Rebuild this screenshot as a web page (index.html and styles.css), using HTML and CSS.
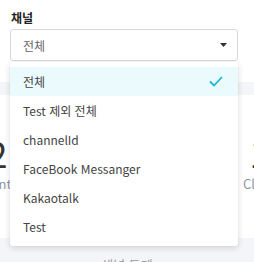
FILE: index.html
```html
<!DOCTYPE html>
<html lang="ko">
<head>
<meta charset="utf-8">
<link rel="stylesheet" href="styles.css">
</head>
<body>
<div class="filter">
  <div class="label">채널</div>
  <div class="select">
    <span class="value">전체</span>
    <svg class="caret" width="7" height="4" viewBox="0 0 7 4"><path d="M0 0H7L3.5 4Z" fill="#333"/></svg>
  </div>
  <ul class="menu">
    <li class="item selected">전체
      <svg class="check" width="14" height="11" viewBox="0 0 14 11"><path d="M1 5.5L5 9.5L13 1" fill="none" stroke="#1fb6d4" stroke-width="1.8"/></svg>
    </li>
    <li class="item">Test 제외 전체</li>
    <li class="item">channelId</li>
    <li class="item">FaceBook Messanger</li>
    <li class="item">Kakaotalk</li>
    <li class="item">Test</li>
  </ul>
</div>
<div class="dashboard">
  <div class="cards">
    <div class="card"><div class="num">2</div><div class="cap">Sent</div></div>
    <div class="card"><div class="num">0</div><div class="cap">Open</div></div>
    <div class="card"><div class="num">1</div><div class="cap">Close</div></div>
  </div>
  <div class="section-title">채널 통계</div>
</div>
</body>
</html>
```
FILE: styles.css
```css
* { box-sizing: border-box; }
html, body { margin: 0; padding: 0; }
body {
  font-family: "Noto Sans CJK KR", "Noto Sans", sans-serif;
  background: #fff;
  overflow: hidden;
  width: 254px;
  height: 262px;
}
.filter {
  position: relative;
  padding: 9px 16px 21px 10px;
  background: #fff;
}
.label {
  font-size: 12px;
  font-weight: 700;
  color: #222;
  line-height: 17px;
  margin: 0 0 3px 1px;
}
.select {
  height: 32px;
  border: 1px solid #d4d7dc;
  border-radius: 3px;
  display: flex;
  align-items: center;
  justify-content: space-between;
  padding: 0 10px 0 12px;
}
.value {
  font-size: 12px;
  color: #666;
}
.caret { display: block; }
.menu {
  position: absolute;
  top: 62px;
  left: 10px;
  width: 228px;
  margin: 0;
  padding: 5px 0;
  list-style: none;
  background: #fff;
  border-radius: 3px;
  box-shadow: 0 2px 6px rgba(0, 0, 0, 0.14), 0 0 1px rgba(0, 0, 0, 0.12);
  z-index: 2;
}
.item {
  height: 29px;
  display: flex;
  align-items: center;
  justify-content: space-between;
  padding: 0 15px 0 13px;
  font-size: 12px;
  color: #444;
}
.item.selected { background: #ebfbfd; }
.check { display: block; }
.dashboard {
  background: #f4f5f8;
  padding-top: 13px;
}
.cards {
  display: grid;
  grid-template-columns: repeat(3, 121px);
  gap: 10px;
  margin-left: -63px;
}
.card {
  background: #fff;
  height: 143px;
  text-align: center;
  padding-top: 37px;
}
.num {
  font-size: 36px;
  line-height: 40px;
  color: #333;
}
.cap {
  font-size: 13px;
  color: #8d96a6;
  line-height: 18px;
  margin-top: 3px;
}
.section-title {
  text-align: center;
  font-size: 13px;
  color: #999;
  padding-top: 17px;
}
```
